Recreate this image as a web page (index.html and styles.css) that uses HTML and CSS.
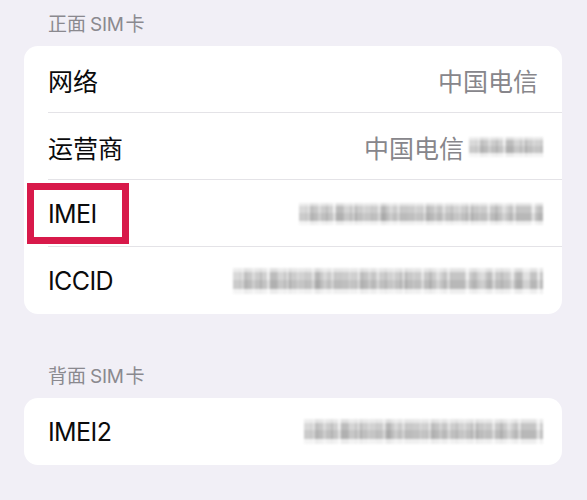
FILE: index.html
```html
<!DOCTYPE html>
<html lang="zh">
<head>
<meta charset="utf-8">
<link rel="stylesheet" href="styles.css">
</head>
<body>
<div class="page">
  <div class="section-title">正面<span class="latin">SIM</span>卡</div>
  <div class="card">
    <div class="row">
      <span class="label">网络</span>
      <span class="value">中国电信</span>
    </div>
    <div class="row">
      <span class="label">运营商</span>
      <span class="value">中国电信 <span class="mask mask-short"></span></span>
    </div>
    <div class="row">
      <span class="label latin-label">IMEI</span>
      <span class="value"><span class="mask mask-imei"></span></span>
      <span class="highlight"></span>
    </div>
    <div class="row">
      <span class="label latin-label">ICCID</span>
      <span class="value"><span class="mask mask-iccid"></span></span>
    </div>
  </div>

  <div class="section-title second">背面<span class="latin">SIM</span>卡</div>
  <div class="card">
    <div class="row">
      <span class="label latin-label">IMEI2</span>
      <span class="value"><span class="mask mask-imei2"></span></span>
    </div>
  </div>
</div>
</body>
</html>
```

FILE: styles.css
```css
html, body {
  margin: 0;
  padding: 0;
  background: #f1eff6;
}

body {
  font-family: Inter, "Noto Sans CJK SC", sans-serif;
  -webkit-font-smoothing: antialiased;
}

.page {
  padding: 13px 25px 0 24px;
}

.section-title {
  padding-left: 24px;
  height: 24px;
  line-height: 24px;
  font-size: 19px;
  color: #8a898f;
  margin-bottom: 9px;
}

.section-title .latin {
  margin: 0 2px 0 4px;
  letter-spacing: -0.3px;
}

.section-title.second {
  margin-top: 51px;
}

.card {
  background: #ffffff;
  border-radius: 14px;
  overflow: hidden;
}

.row {
  position: relative;
  display: flex;
  align-items: center;
  justify-content: space-between;
  height: 67px;
  padding: 0 24px;
  box-sizing: border-box;
}

.row + .row::before {
  content: "";
  position: absolute;
  top: -1px;
  left: 24px;
  right: 0;
  height: 1px;
  background: #e4e3e7;
}

.label {
  font-size: 25px;
  color: #0b0b0c;
}

.latin-label {
  letter-spacing: -0.6px;
}

.value {
  display: flex;
  align-items: center;
  gap: 5px;
  font-size: 25px;
  color: #87868b;
}

.mask {
  display: inline-block;
  height: 22px;
  margin-right: -5px;
  background-color: #ffffff;
  background-image:
    linear-gradient(180deg, rgba(255,255,255,0.55) 0 15%, rgba(255,255,255,0) 15% 80%, rgba(255,255,255,0.7) 80% 100%),
    repeating-linear-gradient(90deg, #e3e3e3 0 8px, #fafafa 8px 11px, #d6d6d6 11px 19px, #ebebeb 19px 27px, #dadada 27px 34px, #fdfdfd 34px 37px, #d2d2d2 37px 45px),
    repeating-linear-gradient(90deg, #ffffff 0 7px, #efefef 7px 15px, #fafafa 15px 22px, #e8e8e8 22px 29px),
    linear-gradient(180deg, #f4f4f4 0 45%, #e4e4e4 45% 80%, #f8f8f8 80% 100%);
  background-blend-mode: normal, multiply, multiply, normal;
  filter: blur(0.9px);
}

.mask-short { width: 74px; height: 20px; }
.mask-imei { width: 244px; }
.mask-iccid { width: 310px; height: 26px; }
.mask-imei2 { width: 239px; height: 25px; }

.highlight {
  position: absolute;
  left: 3px;
  top: 3px;
  width: 102px;
  height: 61px;
  box-sizing: border-box;
  border: 7px solid #d8194a;
}
```
